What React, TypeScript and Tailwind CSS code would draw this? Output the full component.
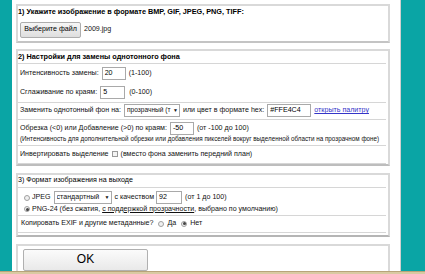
import React from "react";

const Inp = ({ v, w }: { v: string; w: string }) => (
  <div className={`${w} h-[13px] border border-[#a9a9a9] bg-white flex items-center pl-[2px] text-[7.1px] text-black leading-none`}>
    {v}
  </div>
);

const Radio = ({ on }: { on?: boolean }) => (
  <div className="w-[6px] h-[6px] rounded-full border border-[#a0a0a0] bg-[#f0f0f0] flex items-center justify-center">
    {on ? <div className="w-[3px] h-[3px] rounded-full bg-[#444]" /> : null}
  </div>
);

const Sel = ({ t, w, small }: { t: string; w: string; small?: boolean }) => (
  <div className={`${w} h-[13px] border border-[#a9a9a9] bg-white flex items-center pl-[2px] pr-[1px] leading-none overflow-hidden`}>
    <span className={`flex-1 min-w-0 whitespace-nowrap overflow-hidden ${small ? "text-[6.6px]" : "text-[7.1px]"}`}>{t}</span>
    <span className="shrink-0 text-[5px] pl-[1px]">▼</span>
  </div>
);

export default function App() {
  return (
    <div
      className="w-[425px] h-[274px] flex flex-col overflow-hidden bg-white text-[#111]"
      style={{ fontFamily: '"Liberation Sans", Arial, sans-serif' }}
    >
      <div className="flex-1 flex overflow-hidden">
        <div className="w-[12px] bg-[#0aa5a5]" />
        <div className="flex-1 pl-[4px] pr-[10px] pt-[4px] flex flex-col gap-[6px] text-[7.1px] leading-none">
          {/* Box 1 */}
          <div className="border-2 border-[#d9d9d9] border-b-[#c4c4c4] h-[40px] flex flex-col">
            <div className="h-[12px] flex items-center font-bold text-black text-[7.3px]">
              1) Укажите изображение в формате BMP, GIF, JPEG, PNG, TIFF:
            </div>
            <div className="flex items-center mt-[4px] pl-[2px] gap-[3px]">
              <div className="h-[16px] w-[61px] border border-[#adadad] rounded-[2px] bg-gradient-to-b from-[#f6f6f6] to-[#dedede] flex items-center justify-center text-black">
                Выберите файл
              </div>
              <span>2009.jpg</span>
            </div>
          </div>

          {/* Box 2 */}
          <div className="border-2 border-[#d9d9d9] border-b-[#bdbdbd] h-[121px] flex flex-col">
            <div className="h-[13px] flex items-center font-bold text-black text-[7.3px] border-b border-[#d6d6d6] mr-[2px]">
              2) Настройки для замены однотонного фона
            </div>
            <div className="h-[39px] flex flex-col border-b border-[#d6d6d6] mr-[2px] pl-[2px]">
              <div className="h-[19px] flex items-center gap-[3px]">
                <span>Интенсивность замены:</span>
                <Inp v="20" w="w-[24px]" />
                <span>(1-100)</span>
              </div>
              <div className="h-[19px] flex items-center gap-[3px]">
                <span>Сглаживание по краям:</span>
                <Inp v="5" w="w-[25px]" />
                <span className="pl-[1px]">(0-100)</span>
              </div>
            </div>
            <div className="h-[17px] flex items-center gap-[3px] border-b border-[#d6d6d6] mr-[2px] pl-[2px]">
              <span>Заменить однотонный фон на:</span>
              <Sel t="прозрачный (т" w="w-[56px]" small />
              <span>или цвет в формате hex:</span>
              <Inp v="#FFE4C4" w="w-[44px]" />
              <span className="text-[#3535c8] underline">открыть палитру</span>
            </div>
            <div className="h-[26px] flex flex-col justify-center border-b border-[#d6d6d6] mr-[2px] pl-[2px]">
              <div className="flex items-center gap-[3px] h-[14px]">
                <span>Обрезка (&lt;0) или Добавление (&gt;0) по краям:</span>
                <Inp v="-50" w="w-[24px]" />
                <span>(от -100 до 100)</span>
              </div>
              <div className="text-[6.3px] whitespace-nowrap leading-none">
                (Интенсивность для дополнительной обрезки или добавления пикселей вокруг выделенной области на прозрачном фоне)
              </div>
            </div>
            <div className="h-[18px] flex items-center gap-[3px] border-b border-[#d6d6d6] mr-[2px] pl-[2px]">
              <span>Инвертировать выделение</span>
              <div className="w-[6px] h-[6px] border border-[#9a9a9a] bg-[#f4f4f4]" />
              <span>(вместо фона заменить передний план)</span>
            </div>
          </div>

          {/* Box 3 */}
          <div className="mt-[1px] border-2 border-[#d9d9d9] border-b-[#b5b5b5] h-[67px] flex flex-col">
            <div className="h-[13px] flex items-center text-black border-b border-[#d6d6d6] mr-[2px]">
              3) Формат изображения на выходе
            </div>
            <div className="h-[28px] flex flex-col pt-[4px] border-b border-[#d6d6d6] mr-[2px] pl-[6px]">
              <div className="h-[12px] flex items-center gap-[2px]">
                <Radio />
                <span>JPEG</span>
                <div className="ml-[1px]">
                  <Sel t="стандартный" w="w-[58px]" />
                </div>
                <span className="ml-[1px]">с качеством</span>
                <Inp v="92" w="w-[26px]" />
                <span className="ml-[1px]">(от 1 до 100)</span>
              </div>
              <div className="h-[11px] flex items-center gap-[2px]">
                <Radio on />
                <span>
                  PNG-24 (без сжатия, <span className="underline">с поддержкой прозрачности</span>, выбрано по умолчанию)
                </span>
              </div>
            </div>
            <div className="h-[17px] flex items-center gap-[3px] border-b border-[#d6d6d6] mr-[2px] pl-[3px]">
              <span>Копировать EXIF и другие метаданные?</span>
              <div className="ml-[2px]"><Radio /></div>
              <span>Да</span>
              <div className="ml-[2px]"><Radio on /></div>
              <span>Нет</span>
            </div>
          </div>

          {/* Box 4 */}
          <div className="mt-[1px] border-2 border-b-0 border-[#d9d9d9] flex-1 pl-[5px] pt-[3px]">
            <div className="w-[125px] h-[22px] border border-[#b0b0b0] rounded-[2px] bg-gradient-to-b from-[#fbfbfb] to-[#e9e9e9] flex items-start justify-center pt-[3px] text-[12px] text-black">
              OK
            </div>
          </div>
        </div>
        <div className="w-[1px] bg-[#d0d0d0]" />
        <div className="w-[24px] bg-[#0aa5a5]" />
      </div>
      <div className="h-[3px] bg-[#d9c9a2] border-t border-[#b8a47a]" />
    </div>
  );
}
